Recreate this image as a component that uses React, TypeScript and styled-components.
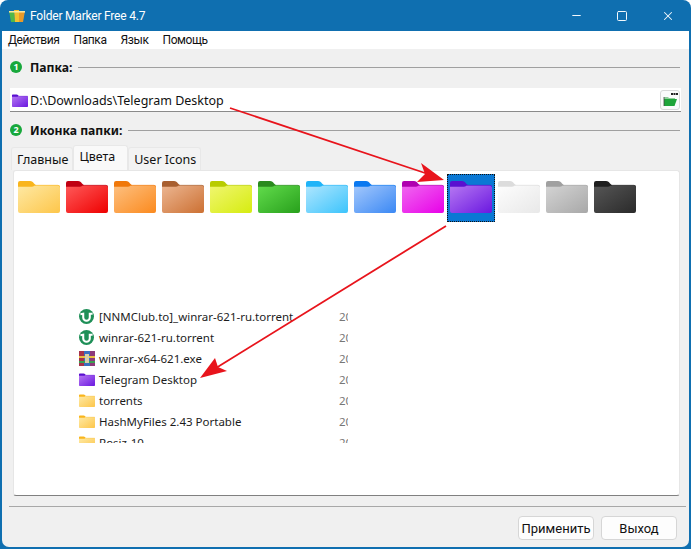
import { useId } from "react";
import styled, { createGlobalStyle } from "styled-components";
import { Minus, Square, X } from "lucide-react";

const GlobalStyle = createGlobalStyle`
  html, body {
    margin: 0;
    padding: 0;
    background: #fff;
  }
  * {
    box-sizing: border-box;
  }
`;

const Window = styled.div`
  position: relative;
  width: 691px;
  height: 549px;
  display: flex;
  flex-direction: column;
  overflow: hidden;
  background: #0f6fb0;
  border-radius: 8px 8px 0 0;
  font-family: "Noto Sans", "Open Sans", sans-serif;
  font-size: 12.5px;
  color: #111;
`;

const TitleBar = styled.div`
  height: 31px;
  flex: none;
  display: flex;
  align-items: center;
  padding-left: 9px;
  color: #fff;
  font-family: Roboto, sans-serif;
  font-size: 12px;
  letter-spacing: -0.2px;
`;

const TitleText = styled.span`
  margin-left: 5px;
  flex: 1;
`;

const WinButton = styled.div`
  width: 46px;
  height: 31px;
  display: flex;
  align-items: center;
  justify-content: center;
  color: #f2f8fc;
`;

const Inner = styled.div`
  flex: 1;
  min-height: 0;
  margin: 0 2px 2px;
  display: flex;
  flex-direction: column;
  background: #f0f0f0;
  border-radius: 0 0 7px 7px;
`;

const MenuBar = styled.div`
  height: 18px;
  flex: none;
  display: flex;
  align-items: center;
  gap: 14px;
  padding-left: 6px;
  background: #fff;
  font-family: Roboto, sans-serif;
  font-size: 12px;
  letter-spacing: -0.4px;
`;

const Section = styled.div`
  display: flex;
  align-items: center;
  height: 18px;
  margin: 9px 9px 0 8px;
  font-weight: 700;
  font-size: 12.2px;
`;

const Badge = styled.span`
  width: 12px;
  height: 12px;
  flex: none;
  border-radius: 50%;
  background: #18a83c;
  color: #fff;
  font-size: 9px;
  line-height: 12px;
  text-align: center;
  font-weight: 700;
  margin-right: 8px;
`;

const SectionRule = styled.span`
  flex: 1;
  height: 1px;
  margin-left: 6px;
  background: #a0a0a0;
`;

const PathBox = styled.div`
  height: 24px;
  flex: none;
  margin: 12px 8px 0 8px;
  display: flex;
  align-items: center;
  background: #fff;
  border-bottom: 1px solid #8a8a8a;
  padding: 1px 0 0 2px;
`;

const PathText = styled.span`
  margin-left: 2px;
  flex: 1;
  font-size: 12.5px;
`;

const BrowseButton = styled.div`
  width: 20px;
  height: 20px;
  margin-right: 1px;
  display: flex;
  align-items: center;
  justify-content: center;
  background: #fbfbfb;
  border: 1px solid #d8d8d8;
  border-radius: 3px;
`;

const TabRow = styled.div`
  display: flex;
  align-items: flex-end;
  height: 25px;
  flex: none;
  margin: 6px 0 0 9px;
`;

const Tab = styled.div<{ $active?: boolean }>`
  height: ${(p) => (p.$active ? 25 : 23)}px;
  padding: ${(p) => (p.$active ? "0 12px 4px 5px" : "0 4px 0 5px")};
  display: flex;
  align-items: center;
  background: ${(p) => (p.$active ? "#f9f9f9" : "#f3f3f3")};
  border: 1px solid #e8e8e8;
  border-bottom: none;
  border-radius: 3px 3px 0 0;
`;

const Panel = styled.div`
  flex: none;
  height: 326px;
  margin: 0 9px 0 11px;
  background: #fff;
  border: 1px solid #e6e6e6;
  border-bottom: 1px solid #808080;
  border-radius: 3px;
  padding: 3px 0 0 1px;
  overflow: hidden;
`;

const FolderGrid = styled.div`
  display: flex;
`;

const FolderCell = styled.div<{ $selected?: boolean }>`
  width: 48px;
  height: 48px;
  flex: none;
  padding: 6px 0 0 3px;
  background: ${(p) => (p.$selected ? "#0a78d4" : "transparent")};
  outline: ${(p) => (p.$selected ? "1px dotted #111" : "none")};
  outline-offset: -1px;
`;

const FileList = styled.div`
  height: 139px;
  width: 269px;
  margin: 82px 0 0 64px;
  overflow: hidden;
  padding-top: 2px;
`;

const FileRow = styled.div`
  height: 21px;
  display: flex;
  align-items: center;
  font-size: 11.5px;
  color: #1c1c1c;
`;

const FileIcon = styled.span`
  width: 20px;
  height: 16px;
  flex: none;
  display: flex;
  align-items: center;
`;

const FileName = styled.span`
  flex: 1;
  white-space: nowrap;
`;

const FileDate = styled.span`
  width: 9px;
  overflow: hidden;
  color: #777;
`;

const Footer = styled.div`
  flex: 1;
  margin: 10px 3px 0 7px;
  border-top: 1px solid #a8a8a8;
  display: flex;
  justify-content: flex-end;
  align-items: flex-start;
  gap: 7px;
  padding: 9px 9px 0 0;
`;

const ActionButton = styled.div`
  width: 76px;
  height: 24px;
  display: flex;
  align-items: center;
  justify-content: center;
  background: #fdfdfd;
  border: 1px solid #d6d6d6;
  border-radius: 4px;
  font-family: Roboto, sans-serif;
  font-size: 13px;
`;

const ArrowLayer = styled.svg`
  position: absolute;
  left: 0;
  top: 0;
  width: 691px;
  height: 549px;
  pointer-events: none;
`;

type FolderColor = { tab: string; from: string; to: string };

const FOLDERS: FolderColor[] = [
  { tab: "#f9b51c", from: "#fee9a4", to: "#fdc64a" },
  { tab: "#c00012", from: "#ff5a5a", to: "#ee0000" },
  { tab: "#f0780a", from: "#fdc080", to: "#fb8a1e" },
  { tab: "#a85f30", from: "#ecb692", to: "#cc7032" },
  { tab: "#b8cc00", from: "#f0f670", to: "#d6ec10" },
  { tab: "#2a8a1e", from: "#62dc4c", to: "#28a01c" },
  { tab: "#20b4f8", from: "#b0e6fe", to: "#3cc4fc" },
  { tab: "#0a78f0", from: "#a4c8fc", to: "#3a88f4" },
  { tab: "#b000b0", from: "#f068f0", to: "#e800e8" },
  { tab: "#5a10d0", from: "#b678f2", to: "#6a18e0" },
  { tab: "#dcdcdc", from: "#fdfdfd", to: "#e8e8e8" },
  { tab: "#a0a0a0", from: "#d4d4d4", to: "#a8a8a8" },
  { tab: "#1e1e1e", from: "#565656", to: "#2a2a2a" },
];

const YELLOW = FOLDERS[0];
const PURPLE = FOLDERS[9];

function Folder({ color, width, height }: { color: FolderColor; width: number; height: number }) {
  const id = useId();
  return (
    <svg
      width={width}
      height={height}
      viewBox="0 0 42 34"
      preserveAspectRatio="none"
      style={{ display: "block" }}
    >
      <defs>
        <linearGradient id={id} x1="0" y1="0" x2="1" y2="1">
          <stop offset="0" stopColor={color.from} />
          <stop offset="1" stopColor={color.to} />
        </linearGradient>
      </defs>
      <path
        d="M0 3a2 2 0 0 1 2-2h10c2 0 3 1 4 2.500l2 2v3H0z"
        fill={color.tab}
      />
      <path
        d="M0 7h14c1.500 0 2-.5 3-1.500h23a2 2 0 0 1 2 2V32a2 2 0 0 1-2 2H2a2 2 0 0 1-2-2z"
        fill={`url(#${id})`}
      />
      <path d="M17 5.500h23a2 2 0 0 1 2 2" fill="none" stroke={color.tab} strokeWidth=".7" />
    </svg>
  );
}

function TorrentIcon() {
  return (
    <svg width="15" height="15" viewBox="0 0 16 16">
      <circle cx="8" cy="8" r="8" fill="#1e8f57" />
      <path d="M1.500 5.500 4.500 5v4a3.500 3.500 0 0 0 7 0V5h3" fill="none" stroke="#fff" strokeWidth="2.200" />
    </svg>
  );
}

function RarIcon() {
  return (
    <svg width="16" height="15" viewBox="0 0 16 15">
      <rect x="0" y="0" width="5" height="15" fill="#a8324a" />
      <rect x="5" y="0" width="6" height="15" fill="#3a6fc0" />
      <rect x="11" y="0" width="5" height="15" fill="#8c3a7a" />
      <rect x="0" y="5" width="16" height="2" fill="#e8c040" />
      <rect x="0" y="10" width="16" height="2" fill="#3aa050" />
      <rect x="6" y="3" width="4" height="9" fill="#d8d0a8" />
    </svg>
  );
}

function AppIcon() {
  return (
    <svg width="16" height="14" viewBox="0 0 16 14">
      <path d="M0 2h5l1 11H2z" fill="#4fb84a" />
      <path d="M5 1h5v12H6z" fill="#f2c230" />
      <path d="M10 2h6l-2 11h-4z" fill="#e89a2a" />
      <path d="M0 2h16v1.500H0z" fill="#fbe9a0" />
    </svg>
  );
}

function OpenFolderIcon() {
  return (
    <svg width="15" height="14" viewBox="0 0 15 14">
      <rect x="8" y="0" width="2" height="2" fill="#222" />
      <rect x="10.500" y="0" width="2" height="2" fill="#222" />
      <rect x="13" y="0" width="2" height="2" fill="#222" />
      <path d="M1 4h4l1 1h6v2H1z" fill="#8fce9a" />
      <path d="M1 6h13l-2.500 7H1z" fill="#1fa53a" />
      <path d="M1 13V4" stroke="#444" strokeWidth=".8" />
    </svg>
  );
}

const FILES = [
  { name: "[NNMClub.to]_winrar-621-ru.torrent", icon: <TorrentIcon /> },
  { name: "winrar-621-ru.torrent", icon: <TorrentIcon /> },
  { name: "winrar-x64-621.exe", icon: <RarIcon /> },
  { name: "Telegram Desktop", icon: <Folder color={PURPLE} width={16} height={13} /> },
  { name: "torrents", icon: <Folder color={YELLOW} width={16} height={13} /> },
  { name: "HashMyFiles 2.43 Portable", icon: <Folder color={YELLOW} width={16} height={13} /> },
  { name: "Rosiz-10", icon: <Folder color={YELLOW} width={16} height={13} /> },
];

function App() {
  return (
    <Window>
      <GlobalStyle />
      <TitleBar>
        <AppIcon />
        <TitleText>Folder Marker Free 4.7</TitleText>
        <WinButton>
          <Minus size={13} strokeWidth={2} />
        </WinButton>
        <WinButton>
          <Square size={12} strokeWidth={2} />
        </WinButton>
        <WinButton>
          <X size={14} strokeWidth={1.8} />
        </WinButton>
      </TitleBar>
      <Inner>
        <MenuBar>
          <span>Действия</span>
          <span>Папка</span>
          <span>Язык</span>
          <span>Помощь</span>
        </MenuBar>
        <Section>
          <Badge>1</Badge>
          Папка:
          <SectionRule />
        </Section>
        <PathBox>
          <Folder color={PURPLE} width={16} height={13} />
          <PathText>D:\Downloads\Telegram Desktop</PathText>
          <BrowseButton>
            <OpenFolderIcon />
          </BrowseButton>
        </PathBox>
        <Section>
          <Badge>2</Badge>
          Иконка папки:
          <SectionRule />
        </Section>
        <TabRow>
          <Tab>Главные</Tab>
          <Tab $active>Цвета</Tab>
          <Tab>User Icons</Tab>
        </TabRow>
        <Panel>
          <FolderGrid>
            {FOLDERS.map((color, i) => (
              <FolderCell key={color.tab} $selected={i === 9}>
                <Folder color={color} width={42} height={33} />
              </FolderCell>
            ))}
          </FolderGrid>
          <FileList>
            {FILES.map((file) => (
              <FileRow key={file.name}>
                <FileIcon>{file.icon}</FileIcon>
                <FileName>{file.name}</FileName>
                <FileDate>20</FileDate>
              </FileRow>
            ))}
          </FileList>
        </Panel>
        <Footer>
          <ActionButton>Применить</ActionButton>
          <ActionButton>Выход</ActionButton>
        </Footer>
      </Inner>
      <ArrowLayer viewBox="0 0 691 549">
        <path d="M230 108 428 174" stroke="#e8141c" strokeWidth="1.800" fill="none" />
        <path d="M444 180 417 182 425 174 421 163z" fill="#e8141c" />
        <path d="M446 226 216 368" stroke="#e8141c" strokeWidth="1.800" fill="none" />
        <path d="M200 378 215 358 218 367 227 371z" fill="#e8141c" />
      </ArrowLayer>
    </Window>
  );
}

export default App;
